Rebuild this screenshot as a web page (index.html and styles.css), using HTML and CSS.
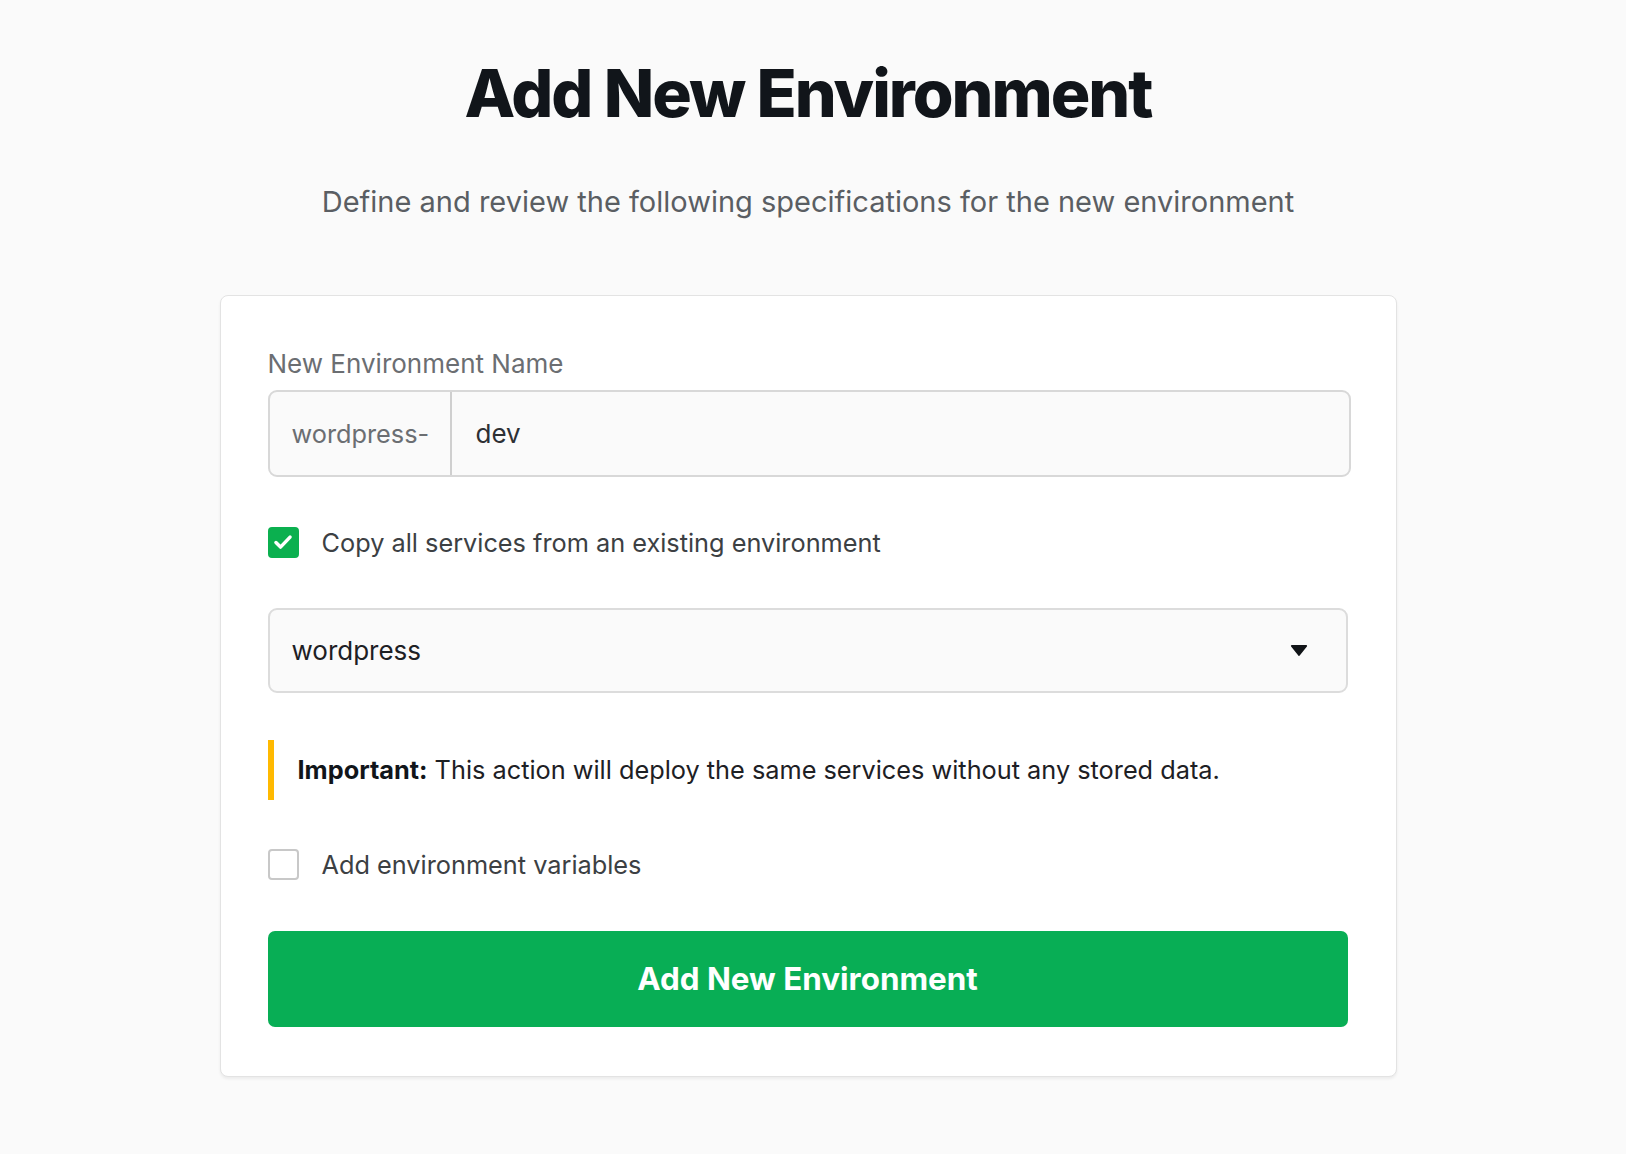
FILE: index.html
```html
<!DOCTYPE html>
<html lang="en">
<head>
<meta charset="utf-8">
<title>Add New Environment</title>
<link rel="stylesheet" href="styles.css">
</head>
<body>
<main class="page">
  <h1 class="title">Add New Environment</h1>
  <p class="subtitle">Define and review the following specifications for the new environment</p>
  <section class="card">
    <label class="label">New Environment Name</label>
    <div class="input-group">
      <span class="prefix">wordpress-</span>
      <span class="value">dev</span>
    </div>
    <div class="check-row">
      <span class="checkbox checked">
        <svg viewBox="0 0 24 24" width="26" height="26"><path d="M5.5 12.5l4.2 4.2L18.5 7.5" fill="none" stroke="#fff" stroke-width="3.2" stroke-linecap="round" stroke-linejoin="round"/></svg>
      </span>
      <span class="check-text">Copy all services from an existing environment</span>
    </div>
    <div class="select">
      <span class="select-text">wordpress</span>
      <svg class="caret" viewBox="0 0 20 14" width="18" height="13"><path d="M2 2h16l-8 10z" fill="#111418" stroke="#111418" stroke-width="2" stroke-linejoin="round"/></svg>
    </div>
    <div class="notice"><strong>Important:</strong> This action will deploy the same services without any stored data.</div>
    <div class="check-row second">
      <span class="checkbox"></span>
      <span class="check-text">Add environment variables</span>
    </div>
    <button class="submit">Add New Environment</button>
  </section>
</main>
</body>
</html>
```

FILE: styles.css
```css
html, body {
  margin: 0;
  padding: 0;
  background: #fafafa;
}
body {
  font-family: Inter, "Noto Sans", sans-serif;
  color: #3c4043;
}
.page {
  width: 1616px;
  display: flex;
  flex-direction: column;
  align-items: center;
  padding-top: 52px;
  padding-bottom: 74px;
}
.title {
  margin: 0;
  font-size: 66px;
  font-weight: 800;
  color: #11151a;
  letter-spacing: -2px;
  line-height: 82px;
}
.subtitle {
  margin: 48px 0 0;
  font-size: 29px;
  line-height: 40px;
  color: #5a5e63;
}
.card {
  margin-top: 73px;
  width: 1177px;
  box-sizing: border-box;
  background: #fff;
  border: 1px solid #e3e3e3;
  border-radius: 8px;
  box-shadow: 0 2px 3px rgba(0,0,0,0.06);
  padding: 50px 48px 49px 47px;
  display: flex;
  flex-direction: column;
}
.label {
  font-size: 26px;
  line-height: 36px;
  color: #6b6e72;
  margin-bottom: 8px;
}
.input-group {
  display: flex;
  height: 87px;
  box-sizing: border-box;
  border: 2px solid #d8d8d8;
  border-radius: 9px;
  background: #fafafa;
  margin-right: -3px;
  font-size: 25.3px;
}
.prefix {
  width: 182px;
  box-sizing: border-box;
  padding-left: 22px;
  display: flex;
  align-items: center;
  color: #6b6e72;
  border-right: 2px solid #cfcfcf;
}
.value {
  display: flex;
  align-items: center;
  padding-left: 24px;
  color: #2d3034;
  font-size: 26px;
}
.check-row {
  display: flex;
  align-items: center;
  margin-top: 49px;
  height: 32px;
}
.check-row.second {
  margin-top: 48px;
}
.checkbox {
  width: 31px;
  height: 31px;
  box-sizing: border-box;
  border: 2px solid #c8c8c8;
  border-radius: 4px;
  background: #fff;
  display: flex;
  align-items: center;
  justify-content: center;
  flex-shrink: 0;
}
.checkbox.checked {
  background: #0bb04f;
  border-color: #0bb04f;
}
.check-text {
  margin-left: 23px;
  font-size: 25.3px;
  color: #3c4043;
}
.select {
  margin-top: 50px;
  height: 85px;
  box-sizing: border-box;
  border: 2px solid #dcdcdc;
  border-radius: 9px;
  background: #fafafa;
  display: flex;
  align-items: center;
  justify-content: space-between;
  padding: 0 38px 0 22px;
}
.select-text {
  font-size: 26px;
  color: #1d2024;
}
.notice {
  margin-top: 47px;
  border-left: 6px solid #ffb900;
  padding: 12px 0 12px 24px;
  font-size: 25.3px;
  line-height: 36px;
  color: #1d2024;
}
.notice strong {
  font-weight: 700;
  color: #11151a;
}
.submit {
  margin-top: 51px;
  height: 96px;
  border: none;
  border-radius: 7px;
  background: #08ae55;
  color: #fff;
  font-family: Inter, "Noto Sans", sans-serif;
  font-size: 31.4px;
  font-weight: 700;
  cursor: pointer;
}
```
